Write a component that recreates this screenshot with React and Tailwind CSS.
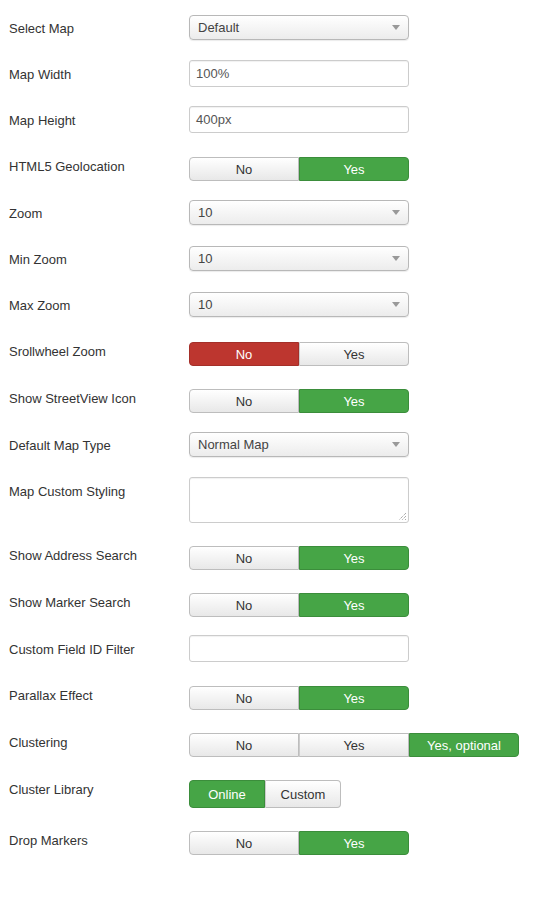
import React from "react";

const font = { fontFamily: '"Liberation Sans", Arial, sans-serif' };

function Label({ children, pt }) {
  return (
    <div className={`w-[189px] shrink-0 pl-[9px] text-[13px] leading-[18px] text-[#333] ${pt}`}>
      {children}
    </div>
  );
}

function Select({ value }) {
  return (
    <div className="relative flex h-[25px] w-[220px] items-center rounded-[4px] border border-[#b8b8b8] bg-gradient-to-b from-white to-[#ececec] pl-[8px] pt-[1px] text-[13px] text-[#444] shadow-[0_1px_1px_rgba(0,0,0,0.08)]">
      {value}
      <span className="absolute right-[8px] top-[9px] h-0 w-0 border-x-[4px] border-t-[5px] border-x-transparent border-t-[#999]" />
    </div>
  );
}

function Input({ value }) {
  return (
    <div className="flex h-[27px] w-[220px] items-center rounded-[3px] border border-[#ccc] bg-white pl-[6px] pt-[1px] text-[13px] text-[#555] shadow-[inset_0_1px_1px_rgba(0,0,0,0.06)]">
      {value}
    </div>
  );
}

function Btn({ children, active, w, first, last, h }) {
  const base = `flex items-center justify-center pt-[1px] text-[13px] ${w} ${h || "h-[24px]"} ${first ? "rounded-l-[4px]" : ""} ${last ? "rounded-r-[4px]" : ""}`;
  if (active === "green")
    return (
      <div className={`${base} border border-[#3b8d3b] bg-[#46a546] text-white`}>{children}</div>
    );
  if (active === "red")
    return (
      <div className={`${base} border border-[#a42f29] bg-[#bd362f] text-white`}>{children}</div>
    );
  return (
    <div className={`${base} border border-[#bdbdbd] ${first ? "" : "border-l-[#ccc]"} bg-gradient-to-b from-white to-[#e8e8e8] text-[#333]`}>
      {children}
    </div>
  );
}

function Toggle({ yes = true }) {
  return (
    <div className="flex">
      <Btn w="w-[110px]" first active={yes ? null : "red"}>No</Btn>
      <Btn w="w-[110px]" last active={yes ? "green" : null}>Yes</Btn>
    </div>
  );
}

function Row({ label, h, pt, children }) {
  return (
    <div className={`flex ${h}`}>
      <Label pt={pt}>{label}</Label>
      <div>{children}</div>
    </div>
  );
}

export default function App() {
  const tin = "pt-[5px]";
  const tog = "pt-[1px]";
  return (
    <div className="min-h-[900px] w-[553px] bg-white pt-[15px]" style={font}>
      <Row label="Select Map" h="h-[45px]" pt={tin}><Select value="Default" /></Row>
      <Row label="Map Width" h="h-[46px]" pt={"pt-[6px]"}><Input value="100%" /></Row>
      <Row label="Map Height" h="h-[51px]" pt={"pt-[6px]"}><Input value="400px" /></Row>
      <Row label="HTML5 Geolocation" h="h-[43px]" pt={tog}><Toggle /></Row>
      <Row label="Zoom" h="h-[46px]" pt={tin}><Select value="10" /></Row>
      <Row label="Min Zoom" h="h-[46px]" pt={tin}><Select value="10" /></Row>
      <Row label="Max Zoom" h="h-[50px]" pt={tin}><Select value="10" /></Row>
      <Row label="Srollwheel Zoom" h="h-[47px]" pt={tog}><Toggle yes={false} /></Row>
      <Row label="Show StreetView Icon" h="h-[43px]" pt={tog}><Toggle /></Row>
      <Row label="Default Map Type" h="h-[45px]" pt={tin}><Select value="Normal Map" /></Row>
      <Row label="Map Custom Styling" h="h-[69px]" pt={"pt-[6px]"}>
        <div className="relative h-[46px] w-[220px] rounded-[3px] border border-[#ccc] bg-white shadow-[inset_0_1px_1px_rgba(0,0,0,0.06)]">
          <svg className="absolute bottom-[1px] right-[1px]" width="9" height="9" viewBox="0 0 9 9">
            <path d="M8 1L1 8M8 4L4 8M8 7L7 8" stroke="#888" strokeWidth="1" strokeDasharray="1 1" />
          </svg>
        </div>
      </Row>
      <Row label="Show Address Search" h="h-[47px]" pt={tog}><Toggle /></Row>
      <Row label="Show Marker Search" h="h-[42px]" pt={tog}><Toggle /></Row>
      <Row label="Custom Field ID Filter" h="h-[51px]" pt={"pt-[6px]"}><Input value="" /></Row>
      <Row label="Parallax Effect" h="h-[47px]" pt={tog}><Toggle /></Row>
      <Row label="Clustering" h="h-[47px]" pt={tog}>
        <div className="flex">
          <Btn w="w-[110px]" first>No</Btn>
          <Btn w="w-[110px]">Yes</Btn>
          <Btn w="w-[110px]" last active="green">Yes, optional</Btn>
        </div>
      </Row>
      <Row label="Cluster Library" h="h-[51px]" pt={tog}>
        <div className="flex">
          <Btn w="w-[76px]" h="h-[28px]" first active="green">Online</Btn>
          <Btn w="w-[76px]" h="h-[28px]" last>Custom</Btn>
        </div>
      </Row>
      <Row label="Drop Markers" h="h-[45px]" pt={tog}><Toggle /></Row>
    </div>
  );
}
